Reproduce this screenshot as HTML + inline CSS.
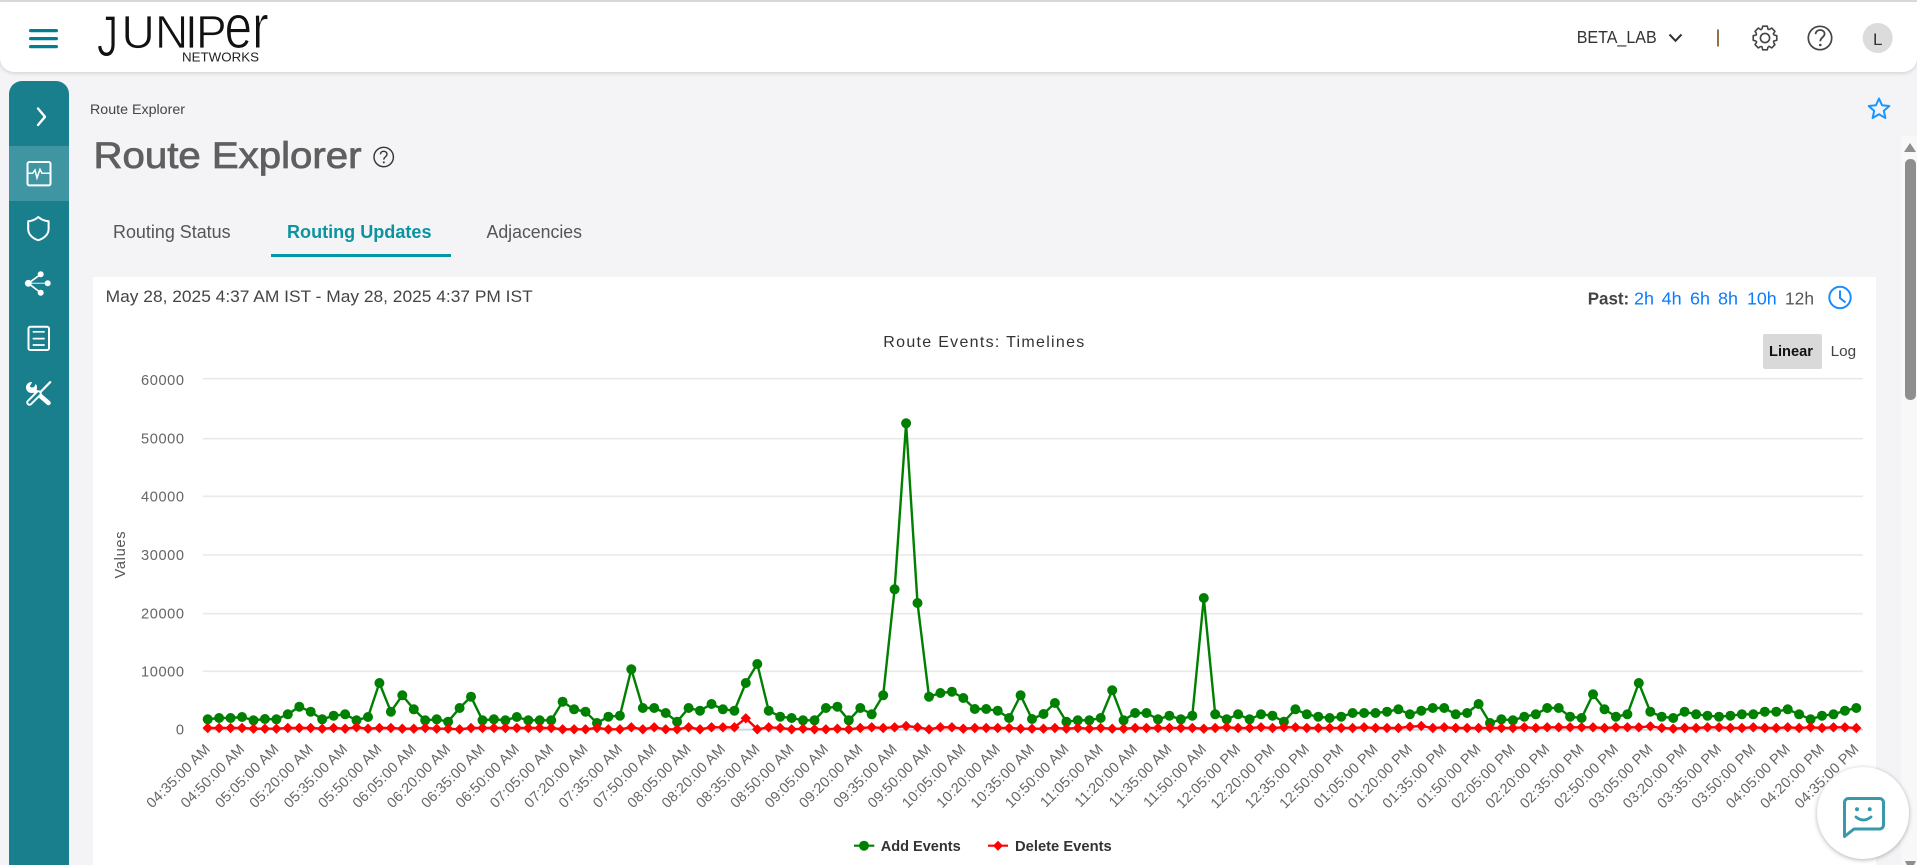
<!DOCTYPE html>
<html lang="en">
<head>
<meta charset="utf-8">
<title>Route Explorer</title>
<style>
html,body{margin:0;padding:0;width:1917px;height:865px;overflow:hidden;background:#f4f4f6;font-family:"Liberation Sans",sans-serif}
.abs{position:absolute}
#top{left:0;top:0;width:1917px;height:2px;background:#dedede}
#hdr{left:0;top:2px;width:1917px;height:69.5px;background:#fff;border-radius:0 0 14px 14px;box-shadow:0 1px 4px rgba(0,0,0,.16)}
#side{left:9px;top:81px;width:60px;height:784px;background:#1a7f8d;border-radius:13px 13px 0 0}
#act{left:9px;top:146px;width:60px;height:55px;background:#3f95a1}
#card{left:93px;top:277px;width:1783px;height:588px;background:#fff}
#sb{left:1901px;top:136px;width:16px;height:729px;background:#f8f8f8}
#thumb{left:1905px;top:159px;width:11px;height:241px;background:#8e8e8e;border-radius:5px}
#btn{left:1763px;top:334px;width:59px;height:35px;background:#d9d9d9;border-radius:2px}
svg{position:absolute;left:0;top:0}
text{font-family:"Liberation Sans",sans-serif}
</style>
</head>
<body>
<div class="abs" id="top"></div>
<div class="abs" id="hdr"></div>
<div class="abs" id="side"></div>
<div class="abs" id="act"></div>
<div class="abs" id="card"></div>
<div class="abs" id="sb"></div>
<div class="abs" id="thumb"></div>
<div class="abs" id="btn"></div>
<svg width="1917" height="865" viewBox="0 0 1917 865" xmlns="http://www.w3.org/2000/svg">
<defs>
<marker id="mc" markerUnits="userSpaceOnUse" markerWidth="12" markerHeight="12" refX="6" refY="6"><circle cx="6" cy="6" r="5" fill="#008000"/></marker>
<marker id="md" markerUnits="userSpaceOnUse" markerWidth="12" markerHeight="12" refX="6" refY="6"><polygon points="6,0.8 11.2,6 6,11.2 0.8,6" fill="#ff0000"/></marker>
<clipPath id="lc"><rect x="90" y="735" width="1800" height="73.5"/></clipPath>
<path id="tooth" d="M-3.03 -8.79L-2.29 -11.78H2.29L3.03 -8.79A9.3 9.3 0 0 1 4.07 -8.36" fill="none" stroke="#444" stroke-width="1.6" stroke-linejoin="round"/>
</defs>

<!-- header -->
<g fill="#00808f">
<rect x="29" y="29" width="29" height="3.2" rx="1.6"/>
<rect x="29" y="37" width="29" height="3.2" rx="1.6"/>
<rect x="29" y="45" width="29" height="3.2" rx="1.6"/>
</g>
<g fill="#111" stroke="#fff" stroke-width="0.8" font-size="46">
<text transform="translate(97 56) scale(.92 1.24)">J</text>
<text x="121.5 155 185 196" y="48">UNIP</text>
<text transform="translate(224.5 48) scale(1.08 1.35)">er</text>
</g>
<text x="182" y="61.5" font-size="12.5" fill="#222" textLength="77" lengthAdjust="spacingAndGlyphs">NETWORKS</text>

<text x="1576.7" y="43" font-size="17.5" fill="#333" textLength="80" lengthAdjust="spacingAndGlyphs">BETA_LAB</text>
<path d="M1669.5 34.5L1675.5 40.8L1681.5 34.5" fill="none" stroke="#333" stroke-width="2"/>
<rect x="1717" y="29.5" width="2" height="17" fill="#94704a"/>
<g transform="translate(1765 38)">
<use href="#tooth"/><use href="#tooth" transform="rotate(45)"/><use href="#tooth" transform="rotate(90)"/><use href="#tooth" transform="rotate(135)"/><use href="#tooth" transform="rotate(180)"/><use href="#tooth" transform="rotate(225)"/><use href="#tooth" transform="rotate(270)"/><use href="#tooth" transform="rotate(315)"/>
<circle r="4.6" fill="none" stroke="#444" stroke-width="1.6"/>
</g>
<circle cx="1820" cy="38" r="11.7" fill="none" stroke="#444" stroke-width="1.7"/>
<path d="M1815.6 34.2C1815.8 31.5 1817.8 30 1820.2 30C1822.8 30 1824.6 31.7 1824.6 33.8C1824.6 37.2 1820.3 37.4 1820.3 41.2" fill="none" stroke="#444" stroke-width="1.8"/>
<circle cx="1820.3" cy="45" r="1.3" fill="#444"/>
<circle cx="1877.7" cy="38" r="15" fill="#dcdcdc"/>
<text x="1877.7" y="45" font-size="17" fill="#333" text-anchor="middle">L</text>

<!-- sidebar icons -->
<path d="M38 108.5L45 116.8L38 125" fill="none" stroke="#fff" stroke-width="2.4" stroke-linecap="round" stroke-linejoin="round"/>
<g fill="none" stroke="#fff">
<rect x="27.5" y="162" width="23" height="23.4" rx="1.8" stroke-width="2"/>
<path d="M27.5 173.3H32.7L35 170L37 178L40 169.3L42 173.3H50.5" stroke-width="1.5"/>
<path d="M38.3 217C35.2 219.8 31.6 221 28.2 221.2V229C28.2 234.8 33 238.6 38.3 240.2C43.6 238.6 48.6 234.8 48.6 229V221.2C45.2 221 41.4 219.8 38.3 217Z" stroke-width="2" stroke-linejoin="round"/>
<path d="M28.3 283.3L40.7 274.3M28.3 283.3L40.7 292.7" stroke-width="1.6"/>
<path d="M28.3 283.3H47.7" stroke-width="1.4" stroke-opacity=".65"/>
<rect x="28.5" y="326.8" width="20.5" height="23.2" rx="1.8" stroke-width="2"/>
<path d="M32.7 331.8H44.7M32.7 338.6H44.7M32.7 345H44.7" stroke-width="1.7"/>
</g>
<g fill="#fff">
<circle cx="28.3" cy="283.3" r="3.4"/>
<circle cx="40.7" cy="274.3" r="3"/>
<circle cx="47.7" cy="283.3" r="3"/>
<circle cx="40.7" cy="292.7" r="3"/>
<circle cx="31.5" cy="387.5" r="5.5"/>
</g>
<path d="M31.5 387.5L35 381" stroke="#1a7f8d" stroke-width="4"/>
<path d="M33 389.5L48.5 403" stroke="#fff" stroke-width="4.5" stroke-linecap="round"/>
<path d="M50.2 382.2L40 392.5" stroke="#fff" stroke-width="2.2" stroke-linecap="round"/>
<path d="M38.5 393.5L29.5 402.5" stroke="#fff" stroke-width="6.5" stroke-linecap="round"/>
<path d="M38.5 393.5L29.5 402.5" stroke="#1a7f8d" stroke-width="2.6" stroke-linecap="round"/>

<!-- page head -->
<text x="90" y="114" font-size="13.5" fill="#444" textLength="95" lengthAdjust="spacingAndGlyphs">Route Explorer</text>
<text x="93.5" y="168" font-size="37" fill="#5f5f5f" stroke="#5f5f5f" stroke-width="0.8" textLength="268" lengthAdjust="spacingAndGlyphs">Route Explorer</text>
<circle cx="383.7" cy="157" r="9.7" fill="none" stroke="#333" stroke-width="1.4"/>
<path d="M380.4 154.4C380.5 152.3 382 151.3 383.7 151.3C385.6 151.3 387 152.6 387 154.2C387 156.7 383.8 156.8 383.8 159.6" fill="none" stroke="#333" stroke-width="1.4"/>
<circle cx="383.8" cy="162.4" r="1" fill="#333"/>
<g font-size="18">
<text x="113" y="238" fill="#555" textLength="117.6" lengthAdjust="spacingAndGlyphs">Routing Status</text>
<text x="287" y="238" fill="#0b93a0" font-weight="bold" textLength="144.5" lengthAdjust="spacingAndGlyphs">Routing Updates</text>
<text x="486.5" y="238" fill="#555" textLength="95.5" lengthAdjust="spacingAndGlyphs">Adjacencies</text>
</g>
<rect x="271" y="254" width="180" height="3" fill="#0097a7"/>
<path d="M1879 98.5L1882 105.2L1889.3 106L1883.8 110.9L1885.4 118L1879 114.3L1872.6 118L1874.2 110.9L1868.7 106L1876 105.2Z" fill="none" stroke="#1a96ff" stroke-width="2" stroke-linejoin="round"/>

<!-- scrollbar arrows -->
<path d="M1910 143L1916 152H1904Z" fill="#8e8e8e"/>
<path d="M1905 861H1916L1914 865H1907Z" fill="#8e8e8e"/>

<!-- card head -->
<text x="105.7" y="302" font-size="17" fill="#444" textLength="427" lengthAdjust="spacingAndGlyphs">May 28, 2025 4:37 AM IST - May 28, 2025 4:37 PM IST</text>
<g font-size="17.5" fill="#0a7cff">
<text x="1587.7" y="304.5" font-weight="bold" fill="#444" textLength="41.5" lengthAdjust="spacingAndGlyphs">Past:</text>
<text x="1634" y="304.5" textLength="20" lengthAdjust="spacingAndGlyphs">2h</text>
<text x="1661.7" y="304.5" textLength="20" lengthAdjust="spacingAndGlyphs">4h</text>
<text x="1690" y="304.5" textLength="20" lengthAdjust="spacingAndGlyphs">6h</text>
<text x="1718" y="304.5" textLength="20" lengthAdjust="spacingAndGlyphs">8h</text>
<text x="1747" y="304.5" textLength="29.7" lengthAdjust="spacingAndGlyphs">10h</text>
<text x="1785" y="304.5" fill="#555" textLength="29" lengthAdjust="spacingAndGlyphs">12h</text>
</g>
<circle cx="1840" cy="297.5" r="10.7" fill="none" stroke="#1a8cff" stroke-width="2"/>
<path d="M1840 290.5V298L1845.5 302.5" fill="none" stroke="#1a8cff" stroke-width="2"/>

<text x="883.3" y="347" font-size="16" fill="#333" textLength="201">Route Events: Timelines</text>
<text x="1769" y="356" font-size="14.6" font-weight="bold" fill="#111" textLength="44" lengthAdjust="spacingAndGlyphs">Linear</text>
<text x="1830.7" y="356" font-size="14.6" fill="#444" textLength="25.5" lengthAdjust="spacingAndGlyphs">Log</text>

<!-- grid -->
<g stroke="#e9e9e9" stroke-width="1.6">
<path d="M203 378.7H1863M203 438.7H1863M203 496.3H1863M203 555H1863M203 613.7H1863M203 671.3H1863"/>
</g>
<path d="M203 729.6H1863" stroke="#ccd6eb" stroke-width="2"/>
<g font-size="14.6" fill="#666" text-anchor="end">
<text x="184" y="385" textLength="43">60000</text>
<text x="184" y="443.5" textLength="43">50000</text>
<text x="184" y="501.5" textLength="43">40000</text>
<text x="184" y="560" textLength="43">30000</text>
<text x="184" y="618.5" textLength="43">20000</text>
<text x="184" y="676.5" textLength="43">10000</text>
<text x="184" y="734.5">0</text>
</g>
<text transform="translate(125 555) rotate(-90)" font-size="14.6" fill="#555" text-anchor="middle" textLength="47">Values</text>

<!-- x labels -->
<g clip-path="url(#lc)">
<g transform="translate(-2 0)" font-size="14.5" letter-spacing=".15" fill="#666" text-anchor="end">
<text transform="translate(213 750) rotate(-45)">04:35:00 AM</text>
<text transform="translate(247.3 750) rotate(-45)">04:50:00 AM</text>
<text transform="translate(281.7 750) rotate(-45)">05:05:00 AM</text>
<text transform="translate(316 750) rotate(-45)">05:20:00 AM</text>
<text transform="translate(350.4 750) rotate(-45)">05:35:00 AM</text>
<text transform="translate(384.7 750) rotate(-45)">05:50:00 AM</text>
<text transform="translate(419.1 750) rotate(-45)">06:05:00 AM</text>
<text transform="translate(453.4 750) rotate(-45)">06:20:00 AM</text>
<text transform="translate(487.8 750) rotate(-45)">06:35:00 AM</text>
<text transform="translate(522.1 750) rotate(-45)">06:50:00 AM</text>
<text transform="translate(556.5 750) rotate(-45)">07:05:00 AM</text>
<text transform="translate(590.8 750) rotate(-45)">07:20:00 AM</text>
<text transform="translate(625.2 750) rotate(-45)">07:35:00 AM</text>
<text transform="translate(659.5 750) rotate(-45)">07:50:00 AM</text>
<text transform="translate(693.9 750) rotate(-45)">08:05:00 AM</text>
<text transform="translate(728.2 750) rotate(-45)">08:20:00 AM</text>
<text transform="translate(762.6 750) rotate(-45)">08:35:00 AM</text>
<text transform="translate(796.9 750) rotate(-45)">08:50:00 AM</text>
<text transform="translate(831.2 750) rotate(-45)">09:05:00 AM</text>
<text transform="translate(865.6 750) rotate(-45)">09:20:00 AM</text>
<text transform="translate(899.9 750) rotate(-45)">09:35:00 AM</text>
<text transform="translate(934.3 750) rotate(-45)">09:50:00 AM</text>
<text transform="translate(968.6 750) rotate(-45)">10:05:00 AM</text>
<text transform="translate(1003 750) rotate(-45)">10:20:00 AM</text>
<text transform="translate(1037.3 750) rotate(-45)">10:35:00 AM</text>
<text transform="translate(1071.7 750) rotate(-45)">10:50:00 AM</text>
<text transform="translate(1106 750) rotate(-45)">11:05:00 AM</text>
<text transform="translate(1140.4 750) rotate(-45)">11:20:00 AM</text>
<text transform="translate(1174.7 750) rotate(-45)">11:35:00 AM</text>
<text transform="translate(1209.1 750) rotate(-45)">11:50:00 AM</text>
<text transform="translate(1243.4 750) rotate(-45)">12:05:00 PM</text>
<text transform="translate(1277.8 750) rotate(-45)">12:20:00 PM</text>
<text transform="translate(1312.1 750) rotate(-45)">12:35:00 PM</text>
<text transform="translate(1346.5 750) rotate(-45)">12:50:00 PM</text>
<text transform="translate(1380.8 750) rotate(-45)">01:05:00 PM</text>
<text transform="translate(1415.1 750) rotate(-45)">01:20:00 PM</text>
<text transform="translate(1449.5 750) rotate(-45)">01:35:00 PM</text>
<text transform="translate(1483.8 750) rotate(-45)">01:50:00 PM</text>
<text transform="translate(1518.2 750) rotate(-45)">02:05:00 PM</text>
<text transform="translate(1552.5 750) rotate(-45)">02:20:00 PM</text>
<text transform="translate(1586.9 750) rotate(-45)">02:35:00 PM</text>
<text transform="translate(1621.2 750) rotate(-45)">02:50:00 PM</text>
<text transform="translate(1655.6 750) rotate(-45)">03:05:00 PM</text>
<text transform="translate(1689.9 750) rotate(-45)">03:20:00 PM</text>
<text transform="translate(1724.3 750) rotate(-45)">03:35:00 PM</text>
<text transform="translate(1758.6 750) rotate(-45)">03:50:00 PM</text>
<text transform="translate(1793 750) rotate(-45)">04:05:00 PM</text>
<text transform="translate(1827.3 750) rotate(-45)">04:20:00 PM</text>
<text transform="translate(1861.7 750) rotate(-45)">04:35:00 PM</text>
</g>
</g>

<!-- series -->
<polyline fill="none" stroke="#008000" stroke-width="2.4" stroke-linejoin="round" marker-start="url(#mc)" marker-mid="url(#mc)" marker-end="url(#mc)" points="207.7,719.3 219.1,718 230.6,718 242,717 253.5,720.3 264.9,719 276.4,719.3 287.8,714.3 299.3,706.7 310.7,711.7 322.2,719.3 333.6,715.7 345.1,714.3 356.5,720.3 368,717 379.4,683 390.9,711.7 402.3,695.3 413.8,709.3 425.2,720.3 436.7,719.3 448.1,721.7 459.6,708 471,696.7 482.5,720.3 493.9,719.3 505.4,720.3 516.8,717 528.3,720.3 539.7,720.3 551.2,720.3 562.6,701.7 574.1,709.3 585.5,711.7 597,723 608.4,716.7 619.9,715.7 631.3,669.3 642.8,708 654.2,708 665.7,713 677.1,721.7 688.6,708 700,710.7 711.5,704 722.9,709.3 734.4,710.7 745.8,683 757.3,664 768.7,710.7 780.2,716.7 791.6,718 803,720.3 814.5,720.3 825.9,708 837.4,706.7 848.8,720.3 860.3,708 871.7,714.3 883.2,695.3 894.6,589.3 906.1,423.3 917.5,603 929,696.7 940.4,693 951.9,691.7 963.3,698 974.8,709 986.2,709 997.7,710.7 1009.1,718 1020.6,695.3 1032,719 1043.5,714 1054.9,703 1066.4,721.7 1077.8,720.3 1089.3,720.3 1100.7,718 1112.2,690.3 1123.6,720.3 1135.1,713 1146.5,713 1158,719.3 1169.4,715.7 1180.9,719.3 1192.3,715.7 1203.8,598 1215.2,714.3 1226.7,719.3 1238.1,714.3 1249.6,719.3 1261,714.3 1272.5,715.7 1283.9,721.7 1295.4,709.3 1306.8,714.3 1318.3,716.7 1329.7,718 1341.2,716.7 1352.6,713 1364.1,713 1375.5,713 1387,711.7 1398.4,709.3 1409.9,714.3 1421.3,710.7 1432.8,708 1444.2,708 1455.7,714.3 1467.1,713 1478.6,704 1490,723 1501.4,719.3 1512.9,720.3 1524.3,716.7 1535.8,714.3 1547.2,708 1558.7,708 1570.1,716.7 1581.6,718 1593,694.3 1604.5,709.3 1615.9,716.7 1627.4,714.3 1638.8,683 1650.3,711.7 1661.7,716.7 1673.2,718 1684.6,711.7 1696.1,714.3 1707.5,715.7 1719,716.7 1730.4,715.7 1741.9,714.3 1753.3,714.3 1764.8,711.7 1776.2,711.7 1787.7,709.3 1799.1,714.3 1810.6,719.3 1822,715.7 1833.5,714.3 1844.9,710.7 1856.3,708"/>
<polyline fill="none" stroke="#ff0000" stroke-width="2.4" stroke-linejoin="round" marker-start="url(#md)" marker-mid="url(#md)" marker-end="url(#md)" points="207.7,728 219.1,728 230.6,728 242,728 253.5,728.7 264.9,728.7 276.4,728.7 287.8,728 299.3,728 310.7,728 322.2,728.7 333.6,728 345.1,728.7 356.5,727.3 368,728.7 379.4,728 390.9,728 402.3,728.7 413.8,728.7 425.2,728 436.7,728.7 448.1,728.7 459.6,729.3 471,728 482.5,728 493.9,728 505.4,728 516.8,728 528.3,728 539.7,728 551.2,728 562.6,729.3 574.1,729.3 585.5,729.3 597,728 608.4,729.3 619.9,729.3 631.3,727.3 642.8,729.3 654.2,727.3 665.7,729.3 677.1,729.3 688.6,727.3 700,729.3 711.5,727.3 722.9,727.3 734.4,727.3 745.8,718.3 757.3,729.3 768.7,727.3 780.2,728 791.6,729.3 803,728.7 814.5,729.3 825.9,729.3 837.4,728.7 848.8,729.3 860.3,728 871.7,727.3 883.2,728 894.6,727.3 906.1,726 917.5,727.3 929,729.3 940.4,727.3 951.9,727.3 963.3,728.7 974.8,728 986.2,728 997.7,728 1009.1,728 1020.6,728.7 1032,728.7 1043.5,728.7 1054.9,728 1066.4,728.7 1077.8,728 1089.3,728.7 1100.7,728 1112.2,728.7 1123.6,728.7 1135.1,728 1146.5,728 1158,728 1169.4,728 1180.9,728 1192.3,728 1203.8,728.7 1215.2,728 1226.7,727.3 1238.1,728 1249.6,728 1261,727.3 1272.5,728 1283.9,727.3 1295.4,727.3 1306.8,728 1318.3,728 1329.7,728 1341.2,728 1352.6,728 1364.1,727.3 1375.5,728 1387,728 1398.4,728 1409.9,726.7 1421.3,726 1432.8,728 1444.2,727.3 1455.7,728 1467.1,728 1478.6,728 1490,728 1501.4,728 1512.9,728 1524.3,727.3 1535.8,728 1547.2,727.3 1558.7,727.3 1570.1,727.3 1581.6,727.3 1593,727.3 1604.5,728 1615.9,727.3 1627.4,727.3 1638.8,727.3 1650.3,726.3 1661.7,728 1673.2,728.7 1684.6,728 1696.1,728 1707.5,727.3 1719,727.3 1730.4,728 1741.9,728 1753.3,727.3 1764.8,728 1776.2,728 1787.7,727.3 1799.1,728 1810.6,727.3 1822,728 1833.5,727.3 1844.9,727.3 1856.3,728"/>

<!-- legend -->
<path d="M854 845.7H874.3" stroke="#008000" stroke-width="2.2"/>
<circle cx="864" cy="845.7" r="5" fill="#008000"/>
<text x="880.7" y="851" font-size="14.6" font-weight="bold" fill="#333" textLength="80" lengthAdjust="spacingAndGlyphs">Add Events</text>
<path d="M988 845.7H1008" stroke="#ff0000" stroke-width="2.2"/>
<polygon points="998,840.7 1003,845.7 998,850.7 993,845.7" fill="#ff0000"/>
<text x="1015" y="851" font-size="14.6" font-weight="bold" fill="#333" textLength="96.7" lengthAdjust="spacingAndGlyphs">Delete Events</text>
</svg>

<!-- chat bubble -->
<div class="abs" style="left:1817px;top:767px;width:92px;height:92px;background:#fff;border-radius:50%;box-shadow:0 1px 5px rgba(0,0,0,.3)"></div>
<svg width="1917" height="865" viewBox="0 0 1917 865" xmlns="http://www.w3.org/2000/svg">
<path d="M1844.5 836.5V802.5a4 4 0 0 1 4-4H1879.5a4 4 0 0 1 4 4V825a4 4 0 0 1-4 4H1854Z" fill="none" stroke="#3a98ab" stroke-width="3" stroke-linejoin="round"/>
<circle cx="1857" cy="809.3" r="2" fill="#3a98ab"/>
<circle cx="1869.7" cy="809.3" r="2" fill="#3a98ab"/>
<path d="M1856 817Q1863.3 823 1871 817" fill="none" stroke="#3a98ab" stroke-width="2.8" stroke-linecap="round"/>
</svg>
</body>
</html>
